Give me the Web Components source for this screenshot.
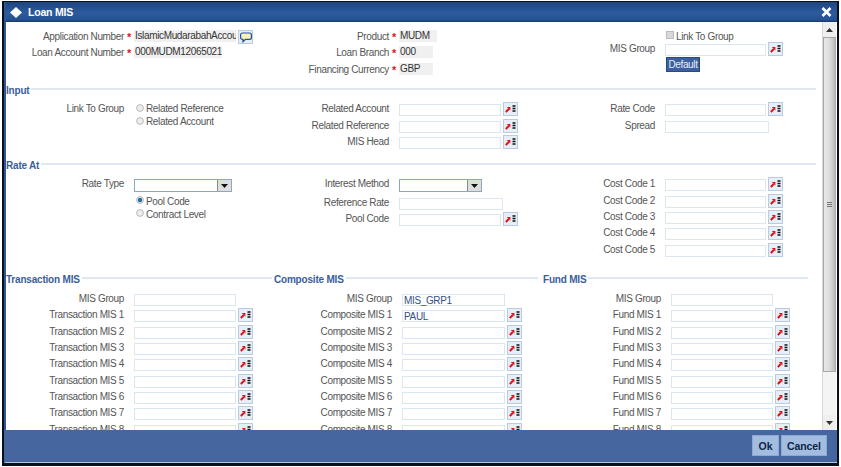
<!DOCTYPE html>
<html>
<head>
<meta charset="utf-8">
<title>Loan MIS</title>
<style>
  html, body { margin: 0; height: 100%; overflow: hidden; background: #fff; }
  body { font: 10px "Liberation Sans", Arial, sans-serif; letter-spacing: -0.35px; color: #555; }
</style>
</head>
<body>

<mis-window heading="Loan MIS">

  <mis-section height="61" pad="8">
    <mis-column label="118" width="268">
      <mis-field req readonly width="102" value="IslamicMudarabahAccou">Application Number<mis-icon-btn slot="after" kind="chat"></mis-icon-btn></mis-field>
      <mis-field req readonly width="88" value="000MUDM12065021">Loan Account Number</mis-field>
    </mis-column>
    <mis-column label="115" width="269">
      <mis-field req readonly width="38" value="MUDM">Product</mis-field>
      <mis-field req readonly width="34" value="000">Loan Branch</mis-field>
      <mis-field req readonly width="34" value="GBP">Financing Currency</mis-field>
    </mis-column>
    <mis-column label="112" width="270">
      <mis-check>Link To Group</mis-check>
      <mis-field width="101" tight>MIS Group<mis-icon-btn slot="after"></mis-icon-btn></mis-field>
      <mis-default>Default</mis-default>
    </mis-column>
  </mis-section>

  <mis-section legend="Input" height="75">
    <mis-column label="118" width="268">
      <mis-field bare>Link To Group<mis-radios slot="control">
        <mis-radio>Related Reference</mis-radio>
        <mis-radio>Related Account</mis-radio>
      </mis-radios></mis-field>
    </mis-column>
    <mis-column label="115" width="269">
      <mis-field width="102">Related Account<mis-icon-btn slot="after"></mis-icon-btn></mis-field>
      <mis-field width="102">Related Reference<mis-icon-btn slot="after"></mis-icon-btn></mis-field>
      <mis-field width="102">MIS Head<mis-icon-btn slot="after"></mis-icon-btn></mis-field>
    </mis-column>
    <mis-column label="112" width="270">
      <mis-field width="101">Rate Code<mis-icon-btn slot="after"></mis-icon-btn></mis-field>
      <mis-field width="104">Spread</mis-field>
    </mis-column>
  </mis-section>

  <mis-section legend="Rate At" height="114">
    <mis-column label="118" width="268">
      <mis-field select width="98">Rate Type</mis-field>
      <mis-radios indent>
        <mis-radio checked>Pool Code</mis-radio>
        <mis-radio>Contract Level</mis-radio>
      </mis-radios>
    </mis-column>
    <mis-column label="115" width="269">
      <mis-field select width="83">Interest Method</mis-field>
      <mis-field width="104" style="margin-top:2px">Reference Rate</mis-field>
      <mis-field width="102">Pool Code<mis-icon-btn slot="after"></mis-icon-btn></mis-field>
    </mis-column>
    <mis-column label="112" width="270">
      <mis-field width="101">Cost Code 1<mis-icon-btn slot="after"></mis-icon-btn></mis-field>
      <mis-field width="101">Cost Code 2<mis-icon-btn slot="after"></mis-icon-btn></mis-field>
      <mis-field width="101">Cost Code 3<mis-icon-btn slot="after"></mis-icon-btn></mis-field>
      <mis-field width="101">Cost Code 4<mis-icon-btn slot="after"></mis-icon-btn></mis-field>
      <mis-field width="101">Cost Code 5<mis-icon-btn slot="after"></mis-icon-btn></mis-field>
    </mis-column>
  </mis-section>

  <mis-section-row>
    <mis-group legend="Transaction MIS" prefix="Transaction MIS" label="118" field="102" span="268" end="266"></mis-group>
    <mis-group legend="Composite MIS" prefix="Composite MIS" label="118" field="103" span="269" end="264" group-value="MIS_GRP1" first-value="PAUL"></mis-group>
    <mis-group legend="Fund MIS" prefix="Fund MIS" label="118" field="102" span="270" end="265"></mis-group>
  </mis-section-row>

  <mis-footer-btn slot="footer" style="width:27px">Ok</mis-footer-btn>
  <mis-footer-btn slot="footer" style="width:46px">Cancel</mis-footer-btn>
</mis-window>

<script>
// the outer dialog: title bar, scrolling body, button bar
class MisWindow extends HTMLElement {
  constructor() {
    super();
    this.attachShadow({ mode: 'open' });
    this.shadowRoot.innerHTML = `
      <style>
        :host { display: flex; flex-direction: column; box-sizing: border-box; width: 837px; height: 465px; margin: 1px 0 0 2px;
          border: solid #0a0f1c; border-width: 1px 2px 3px 2px; background: #fff; }
        .title { flex: none; height: 20px; display: flex; align-items: center; gap: 6px; padding: 0 5px 0 4px; color: #fff; font-weight: bold; font-size: 10.5px; letter-spacing: -0.2px;
          background: linear-gradient(#1d4580, #2c5b9e 55%, #24508f 90%, #173766); border-left: 2px solid #2b5596; }
        .title span { flex: 1; }
        .main { flex: 1; min-height: 0; display: flex; border-left: 2px solid #2f5597; }
        .scroll { flex: 1; min-width: 0; overflow: hidden; }
        .foot { flex: none; height: 33px; display: flex; justify-content: flex-end; gap: 2px; padding: 5px 10px 0 0; box-sizing: border-box; background: #46669f; border-left: 2px solid #46669f;
          border-bottom: 1px solid #b9c4d8; }
        .bar { flex: none; width: 13px; margin-right: 1px; display: flex; flex-direction: column; align-items: stretch; background: #efefef; border-left: 1px solid #d8d8d8; }
        .bar div { flex: none; }
        .up, .down { height: 15px; display: flex; align-items: center; justify-content: center; }
        .thumb { height: 335px; background: linear-gradient(90deg, #e8e8e8, #dcdcdc 50%, #bcbcbc); border: 1px solid #a8a8a8; box-sizing: border-box;
          display: flex; align-items: center; justify-content: center; }
        .track { flex: 1 !important; background: #f4f4f4; }
      </style>
      <div class="title">
        <svg width="12" height="11" viewBox="0 0 14 12" preserveAspectRatio="none"><path d="M7 0 14 6 7 12 0 6Z" fill="#fff"/></svg>
        <span></span>
        <svg width="11" height="10" viewBox="0 0 11 10"><path d="M1.5 1 9.5 9M9.5 1 1.5 9" stroke="#fff" stroke-width="2.6" fill="none"/></svg>
      </div>
      <div class="main">
        <div class="scroll"><slot></slot></div>
        <div class="bar">
          <div class="up"><svg width="7" height="4" viewBox="0 0 7 4"><path d="M3.5 0 7 4H0Z" fill="#333"/></svg></div>
          <div class="thumb"><svg width="5" height="5" viewBox="0 0 5 5"><path d="M0 .5H5M0 2.5H5M0 4.5H5" stroke="#777"/></svg></div>
          <div class="track"></div>
          <div class="down"><svg width="7" height="4" viewBox="0 0 7 4"><path d="M0 0H7L3.5 4Z" fill="#333"/></svg></div>
        </div>
      </div>
      <div class="foot"><slot name="footer"></slot></div>`;
    this.shadowRoot.querySelector('.title span').textContent = this.getAttribute('heading');
  }
}

// a fieldset-like block with a legend and rule, and columns underneath
class MisSection extends HTMLElement {
  constructor() {
    super();
    this.attachShadow({ mode: 'open' });
    this.shadowRoot.innerHTML = `
      <style>
        :host { display: block; box-sizing: border-box; width: 810px; margin-left: 0; }
        .cols { display: flex; }
      </style>
      <div class="cols"><slot></slot></div>`;
    const legend = this.getAttribute('legend');
    if (legend) {
      const l = document.createElement('mis-legend');
      l.textContent = legend;
      this.shadowRoot.prepend(l);
    } else {
      this.shadowRoot.querySelector('.cols').style.paddingTop = (this.getAttribute('pad') || 0) + 'px';
    }
    this.style.height = this.getAttribute('height') + 'px';
  }
}

class MisLegend extends HTMLElement {
  constructor() {
    super();
    this.attachShadow({ mode: 'open' });
    this.shadowRoot.innerHTML = `
      <style>
        :host { display: flex; align-items: center; gap: 2px; height: 14px; margin-bottom: 5.4px; color: #3a5e9b; font-weight: bold; font-size: 10px; letter-spacing: -0.2px; white-space: nowrap; }
        i { flex: 1; height: 2px; margin-top: -2px; background: #dfe8f2; }
      </style>
      <slot></slot><i></i>`;
  }
}

class MisColumn extends HTMLElement {
  constructor() {
    super();
    this.attachShadow({ mode: 'open' });
    this.shadowRoot.innerHTML = `
      <style>
        :host { display: flex; flex-direction: column; flex: none; align-items: flex-start; }
      </style>
      <slot></slot>`;
    this.style.width = this.getAttribute('width') + 'px';
    this.style.setProperty('--label', this.getAttribute('label') + 'px');
  }
}

// label, required star, input and an optional button after it
class MisField extends HTMLElement {
  constructor() {
    super();
    this.attachShadow({ mode: 'open' });
    const w = this.getAttribute('width') || 100;
    const ro = this.hasAttribute('readonly');
    const value = this.getAttribute('value') || '';
    const control = this.hasAttribute('bare') ? '' :
      this.hasAttribute('select')
        ? `<div class="sel" style="width:${w}px"><b><svg width="7" height="4" viewBox="0 0 7 4"><path d="M0 0H7L3.5 4Z" fill="#111"/></svg></b></div>`
        : `<div class="in ${ro ? 'ro' : ''}" style="width:${w}px"></div>`;
    this.shadowRoot.innerHTML = `
      <style>
        :host { display: grid; grid-template-columns: var(--label) 10px auto auto; column-gap: 0; height: 16.33px; flex: none; color: #555; }
        :host([tight]) { height: 15px; }
        .lab { text-align: right; line-height: 14px; height: 14px; white-space: nowrap; }
        .star { color: #e8141c; font-weight: bold; font-size: 11px; text-align: center; line-height: 12px; padding-top: 1px; height: 11px; }
        .in { box-sizing: border-box; height: 12px; margin-top: 2px; background: #fff; border: 1px solid #dbe6f3; line-height: 11px; padding-left: 1px; overflow-x: clip; white-space: nowrap; color: #333; }
        .in.ro { margin-top: 0; height: 12px; background: #f0f0f0; border: 0; padding-left: 1px; line-height: 12px; }
        .in.val { color: #34507f; }
        .sel { box-sizing: border-box; height: 13px; margin-top: 2px; border: 1px solid #8fa6c2; background: #fff; display: flex; justify-content: flex-end; }
        .sel b { width: 13px; background: #dedede; border-left: 1px solid #8a8a8a; display: flex; align-items: center; justify-content: center; }
        ::slotted([slot=after]) { margin-left: 2px; }
      </style>
      <div class="lab"><slot></slot></div>
      <div class="star">${this.hasAttribute('req') ? '*' : ''}</div>
      <slot name="control">${control}</slot>
      <slot name="after"></slot>`;
    const box = this.shadowRoot.querySelector('.in');
    if (box && value) {
      box.textContent = value;
      if (!ro) box.classList.add('val');
    }
  }
}

// lookup button (arrow + list) or the chat bubble one
class MisIconBtn extends HTMLElement {
  constructor() {
    super();
    this.attachShadow({ mode: 'open' });
    const chat = this.getAttribute('kind') === 'chat';
    this.shadowRoot.innerHTML = `
      <style>
        :host { display: flex; align-items: center; justify-content: center; box-sizing: border-box; width: 15px; height: 14px; flex: none;
          background: #e6eef8; border: 1px solid #b9cbe0; }
      </style>` + (chat
      ? `<svg width="12" height="11" viewBox="0 0 12 11"><path d="M2.5 1H9.5C10.6 1 11.4 1.8 11.4 3V5.5C11.4 6.7 10.6 7.4 9.5 7.4H5.5L3 9.8V7.4H2.5C1.4 7.4.6 6.7.6 5.5V3C.6 1.8 1.4 1 2.5 1Z" fill="#fdf3b8" stroke="#1c4fa8" stroke-width="1.2"/></svg>`
      : `<svg width="11" height="8" viewBox="0 0 11 8"><path d="M.8 7 3.8 4" stroke="#e20f16" stroke-width="1.9"/><path d="M1.8 2H5.4V5.6Z" fill="#e20f16"/><path d="M7.5 1H10.5M7.5 3.5H10.5M7.5 6H10.5" stroke="#111" stroke-width="1.7"/></svg>`);
  }
}

class MisRadios extends HTMLElement {
  constructor() {
    super();
    this.attachShadow({ mode: 'open' });
    this.shadowRoot.innerHTML = `
      <style>
        :host { display: flex; flex-direction: column; margin-top: 0; }
        :host([indent]) { margin-left: calc(var(--label) + 10px); margin-top: 1px; }
      </style>
      <slot></slot>`;
  }
}

class MisRadio extends HTMLElement {
  constructor() {
    super();
    this.attachShadow({ mode: 'open' });
    const dot = this.hasAttribute('checked');
    this.shadowRoot.innerHTML = `
      <style>
        :host { display: flex; align-items: center; gap: 2px; height: 13px; white-space: nowrap; color: #555; line-height: 13px; margin-left: 2px; }
        svg { flex: none; margin-top: -2px; }
      </style>
      <svg width="8" height="8" viewBox="0 0 8 8"><circle cx="4" cy="4" r="3.4" fill="#eee" stroke="#aaa" stroke-width=".8"/>${dot ? '<circle cx="4" cy="4" r="2.2" fill="#1f6f9f"/>' : ''}</svg>
      <slot></slot>`;
  }
}

class MisCheck extends HTMLElement {
  constructor() {
    super();
    this.attachShadow({ mode: 'open' });
    this.shadowRoot.innerHTML = `
      <style>
        :host { display: flex; align-items: center; gap: 2px; height: 12px; margin-left: calc(var(--label) + 11px); white-space: nowrap; color: #555; }
        i { width: 8px; height: 8px; background: #d8d8d8; border: 0; box-shadow: inset 0 0 0 1px #bbb; margin-top: -2px; }
      </style>
      <i></i><slot></slot>`;
  }
}

class MisDefault extends HTMLElement {
  constructor() {
    super();
    this.attachShadow({ mode: 'open' });
    this.shadowRoot.innerHTML = `
      <style>
        :host { display: flex; align-items: center; justify-content: center; box-sizing: border-box; width: 34px; height: 15px; margin-left: calc(var(--label) + 11px);
          background: #3c5f9f; color: #e6edf7; border: 1px solid #2d4a80; }
      </style>
      <slot></slot>`;
  }
}

class MisFooterBtn extends HTMLElement {
  constructor() {
    super();
    this.attachShadow({ mode: 'open' });
    this.shadowRoot.innerHTML = `
      <style>
        :host { display: flex; align-items: center; justify-content: center; box-sizing: border-box; height: 21px;
          background: #a3bde0; color: #0e2448; font-weight: bold; font-size: 10.5px; letter-spacing: -0.1px; border: 1px solid #8ea8cf; }
      </style>
      <slot></slot>`;
  }
}

class MisSectionRow extends HTMLElement {
  constructor() {
    super();
    this.attachShadow({ mode: 'open' });
    this.shadowRoot.innerHTML = `
      <style>:host { display: flex; }</style>
      <slot></slot>`;
  }
}

// one of the three bottom blocks: legend, MIS Group and numbered rows
class MisGroup extends HTMLElement {
  constructor() {
    super();
    this.attachShadow({ mode: 'open' });
    this.shadowRoot.innerHTML = `
      <style>
        :host { display: flex; flex-direction: column; align-items: flex-start; flex: none; }
        mis-legend { align-self: flex-start; margin-bottom: 6px; }
      </style>
      <mis-legend></mis-legend><slot></slot>`;
    this.style.width = this.getAttribute('span') + 'px';
    this.style.setProperty('--label', this.getAttribute('label') + 'px');
    const legend = this.shadowRoot.querySelector('mis-legend');
    legend.textContent = this.getAttribute('legend');
    legend.style.width = this.getAttribute('end') + 'px';
  }

  connectedCallback() {
    const w = this.getAttribute('field');
    const btn = '<mis-icon-btn slot="after"></mis-icon-btn>';
    let html = `<mis-field width="${w}" value="${this.getAttribute('group-value') || ''}">MIS Group</mis-field>`;
    for (let i = 1; i <= 8; i++) {
      const val = i === 1 ? this.getAttribute('first-value') || '' : '';
      html += `<mis-field width="${w}" value="${val}">${this.getAttribute('prefix')} ${i}${btn}</mis-field>`;
    }
    this.insertAdjacentHTML('beforeend', html);
  }
}

customElements.define('mis-window', MisWindow);
customElements.define('mis-legend', MisLegend);
customElements.define('mis-section', MisSection);
customElements.define('mis-section-row', MisSectionRow);
customElements.define('mis-column', MisColumn);
customElements.define('mis-field', MisField);
customElements.define('mis-icon-btn', MisIconBtn);
customElements.define('mis-radios', MisRadios);
customElements.define('mis-radio', MisRadio);
customElements.define('mis-check', MisCheck);
customElements.define('mis-default', MisDefault);
customElements.define('mis-footer-btn', MisFooterBtn);
customElements.define('mis-group', MisGroup);
</script>
</body>
</html>
